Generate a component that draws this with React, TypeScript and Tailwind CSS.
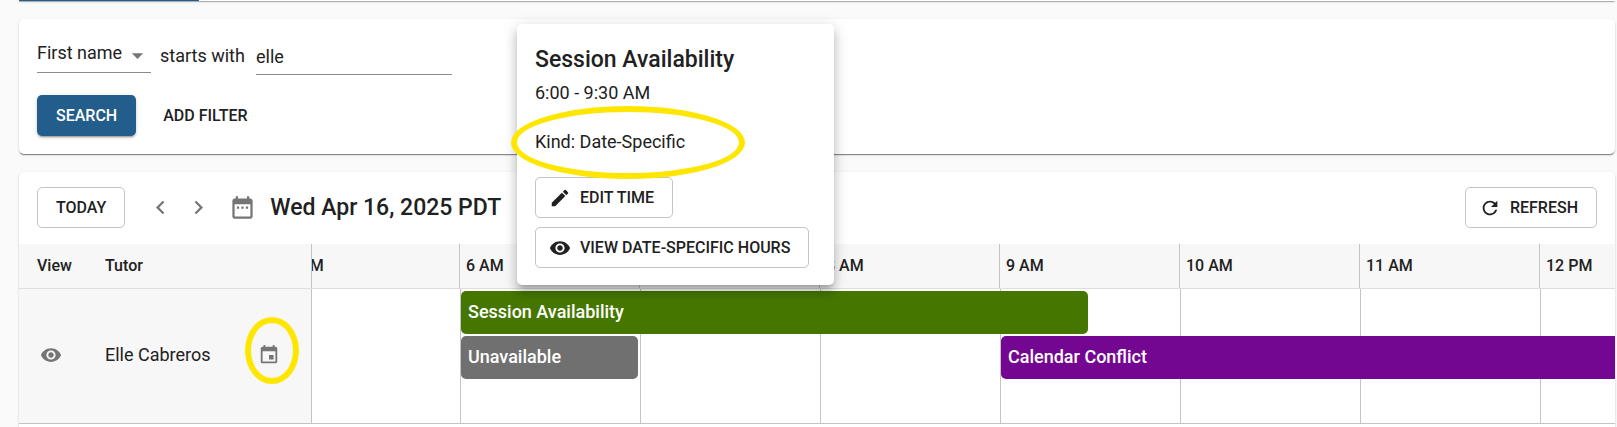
import type { ReactNode } from "react";
import {
  MdArrowDropDown,
  MdChevronLeft,
  MdChevronRight,
  MdDateRange,
  MdEdit,
  MdEvent,
  MdRefresh,
  MdVisibility,
} from "react-icons/md";

const hours = ["5 AM", "6 AM", "7 AM", "8 AM", "9 AM", "10 AM", "11 AM", "12 PM"];

const cardClass =
  "rounded-[5px] bg-white shadow-[0_2px_1px_-1px_rgba(0,0,0,0.3),0_1px_1px_rgba(0,0,0,0.2),0_1px_3px_rgba(0,0,0,0.12)]";

function OutlineButton({ icon, children }: { icon?: ReactNode; children: ReactNode }) {
  return (
    <button
      type="button"
      className={`flex h-[41px] items-center gap-[9px] rounded-[5px] border border-[#c4c4c4] pr-[18px] text-base font-medium whitespace-nowrap uppercase ${
        icon ? "pl-[13px]" : "pl-[18px]"
      }`}
    >
      {icon}
      {children}
    </button>
  );
}

function FilterCard() {
  return (
    <section className={`${cardClass} px-[18px] pt-5 pb-[18px]`}>
      <div className="flex items-start gap-[9px] text-lg">
        <label className="relative flex items-center border-b border-[#8c8c8c]">
          <span className="sr-only">Filter field</span>
          <select className="h-[33px] w-[114px] appearance-none bg-transparent pb-[5px]" defaultValue="First name">
            <option>First name</option>
            <option>Last name</option>
          </select>
          <MdArrowDropDown className="pointer-events-none absolute right-0 size-[27px] text-[#757575]" aria-hidden />
        </label>
        <label htmlFor="filter-value" className="w-[87px] pt-[3px] leading-7">
          starts with
        </label>
        <input
          id="filter-value"
          type="text"
          defaultValue="elle"
          className="h-9 w-[196px] border-b border-[#8c8c8c] pb-px outline-none"
        />
      </div>
      <div className="mt-5 flex items-center gap-[18px]">
        <button
          type="button"
          className="h-[41px] rounded-[5px] bg-[#235d8b] px-[19px] text-base font-medium text-white uppercase shadow-[0_3px_1px_-2px_rgba(0,0,0,0.2),0_2px_2px_rgba(0,0,0,0.14),0_1px_5px_rgba(0,0,0,0.12)]"
        >
          Search
        </button>
        <button type="button" className="h-[41px] px-[9px] text-base font-medium uppercase">
          Add filter
        </button>
      </div>
    </section>
  );
}

function Toolbar() {
  return (
    <div className="flex items-center px-[18px] pt-[15px] pb-4">
      <OutlineButton>Today</OutlineButton>
      <div className="ml-4 flex text-[#757575]">
        <button type="button" aria-label="Previous day" className="flex size-[38px] items-center justify-center">
          <MdChevronLeft className="size-[27px]" />
        </button>
        <button type="button" aria-label="Next day" className="flex size-[38px] items-center justify-center">
          <MdChevronRight className="size-[27px]" />
        </button>
      </div>
      <button type="button" aria-label="Pick a date" className="ml-3 text-[#757575]">
        <MdDateRange className="size-[27px]" />
      </button>
      <h2 className="ml-3.5 text-[23px] leading-8 font-medium">Wed Apr 16, 2025 PDT</h2>
      <div className="ml-auto">
        <OutlineButton icon={<MdRefresh className="size-[22px]" />}>Refresh</OutlineButton>
      </div>
    </div>
  );
}

function EventBar({ className, children }: { className: string; children: ReactNode }) {
  return (
    <div className={`flex h-[43px] items-center rounded-[5px] px-[7px] pb-0.5 text-lg font-medium text-white ${className}`}>
      {children}
    </div>
  );
}

function Schedule() {
  return (
    <div>
      <div className="flex h-[45px] border-b border-[#dedede] bg-[#f7f7f7] text-base font-medium">
        <div className="flex w-[293px] shrink-0 items-center border-r border-[#c4c4c4] pl-[18px]">
          <span className="w-[68px]">View</span>
          <span>Tutor</span>
        </div>
        <div className="flex min-w-0 flex-1 overflow-hidden">
          <div className="-ml-[33px] flex">
            {hours.map((hour) => (
              <div key={hour} className="flex w-[180px] shrink-0 items-center border-l border-[#c4c4c4] pl-1.5">
                {hour}
              </div>
            ))}
          </div>
        </div>
      </div>

      <div className="flex h-[135px] border-b border-[#c4c4c4]">
        <div className="flex w-[293px] shrink-0 items-center border-r border-[#c4c4c4] bg-[#f7f7f7] pr-[31px] pb-0.5 pl-[21px] text-[#757575]">
          <button type="button" aria-label="View tutor" className="w-[65px]">
            <MdVisibility className="size-[22px]" />
          </button>
          <span className="text-lg text-[#212121]">Elle Cabreros</span>
          <button type="button" aria-label="Tutor availability" className="relative ml-auto">
            <MdEvent className="size-[22px]" />
            <span className="pointer-events-none absolute -top-[27px] -left-[13px] h-[67px] w-[54px] rounded-[50%] border-[6px] border-[#ffe600]" />
          </button>
        </div>
        <div className="flex min-w-0 flex-1 overflow-hidden">
          <div className="-ml-8 grid">
            <div className="col-start-1 row-start-1 flex">
              {hours.map((hour) => (
                <div key={hour} className="w-[180px] shrink-0 border-l border-[#c4c4c4]" />
              ))}
            </div>
            {/* half-hour tracks, starting at 5 AM */}
            <div className="col-start-1 row-start-1 grid grid-cols-[repeat(16,90px)] content-start gap-y-0.5 pt-0.5 pl-px">
              <EventBar className="col-start-3 col-end-10 mr-[3px] bg-[#457700]">Session Availability</EventBar>
              <EventBar className="col-start-3 col-end-5 row-start-2 mr-[3px] bg-[#707070]">Unavailable</EventBar>
              <EventBar className="col-start-9 col-end-17 row-start-2 bg-[#740791]">Calendar Conflict</EventBar>
            </div>
          </div>
        </div>
      </div>
      <div className="h-16" />
    </div>
  );
}

function SessionPopover() {
  return (
    <div
      role="dialog"
      aria-label="Session Availability"
      className="absolute top-6 left-[517px] flex w-[317px] flex-col items-start rounded-[5px] bg-white px-[18px] pt-5 pb-[17px] shadow-[0_5px_5px_-3px_rgba(0,0,0,0.2),0_8px_10px_1px_rgba(0,0,0,0.14),0_3px_14px_2px_rgba(0,0,0,0.12)]"
    >
      <h3 className="text-[23px] leading-8 font-medium">Session Availability</h3>
      <p className="mt-[3px] text-lg leading-[27px]">6:00 - 9:30 AM</p>
      <p className="relative mt-[22px] mb-[22px] text-lg leading-[27px]">
        Kind: Date-Specific
        <span className="pointer-events-none absolute -top-[22px] -left-6 z-10 h-[73px] w-[234px] rounded-[50%] border-[6px] border-[#ffe600]" />
      </p>
      <div className="flex flex-col items-start gap-[9px]">
        <OutlineButton icon={<MdEdit className="size-[22px]" />}>Edit time</OutlineButton>
        <OutlineButton icon={<MdVisibility className="size-[22px]" />}>View date-specific hours</OutlineButton>
      </div>
    </div>
  );
}

export default function App() {
  return (
    <div className="relative h-screen overflow-hidden bg-[#fafafa] pr-0.5 pl-[19px] font-[Roboto,sans-serif] text-[#212121]">
      <main className="flex flex-col gap-[18px]">
        <div className="h-px rounded-b-[5px] bg-white shadow-[0_1px_1px_rgba(0,0,0,0.35),0_1px_3px_rgba(0,0,0,0.12)]">
          <div className="h-px w-[180px] bg-[#235d8b]" />
        </div>
        <FilterCard />
        <section className={`${cardClass} overflow-hidden`}>
          <Toolbar />
          <Schedule />
        </section>
      </main>
      <SessionPopover />
    </div>
  );
}
